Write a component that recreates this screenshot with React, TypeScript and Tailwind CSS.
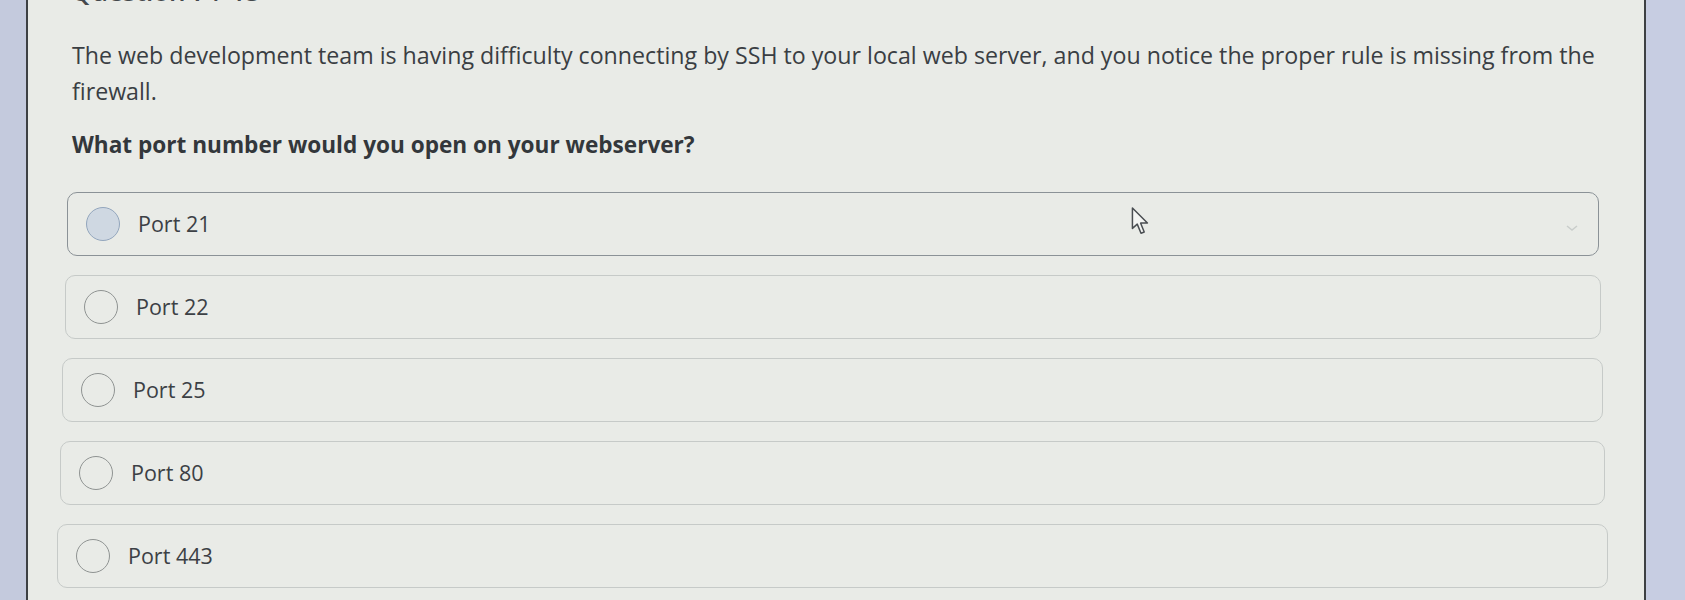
import React from "react";

const options = [
  { label: "Port 21", hover: true, box: "ml-[39px] mr-[45px]" },
  { label: "Port 22", hover: false, box: "ml-[37px] mr-[43px]" },
  { label: "Port 25", hover: false, box: "ml-[34px] mr-[41px]" },
  { label: "Port 80", hover: false, box: "ml-[32px] mr-[39px]" },
  { label: "Port 443", hover: false, box: "ml-[29px] mr-[36px]" },
];

function Radio({ active }: { active: boolean }) {
  return (
    <span
      className={
        active
          ? "block w-[34px] h-[34px] rounded-full border-[1.5px] border-[#93a6bd] bg-[#cfd8e2]"
          : "block w-[34px] h-[34px] rounded-full border-[1.5px] border-[#8f9392]"
      }
    />
  );
}

function App() {
  return (
    <div
      className="flex w-[1685px] h-[600px] overflow-hidden bg-[#c6cce0]"
      style={{ fontFamily: '"Open Sans", "Noto Sans", sans-serif' }}
    >
      {/* left edge of the screen */}
      <div className="w-[26px] shrink-0 bg-[#c4cadd]" />
      <div className="w-[2px] shrink-0 bg-[#3d4043]" />

      {/* page */}
      <div className="relative w-[1616px] shrink-0 bg-[#e9ebe7] text-[#3a3e43]">
        <div className="ml-[43px] -mt-[24px] text-[26px] leading-[30px] font-semibold text-[#44484c]">
          Question 7 / 15
        </div>

        <p className="ml-[44px] mt-[31px] mr-[20px] text-[23.2px] leading-[36px]">
          The web development team is having difficulty connecting by SSH to your local web server, and you notice the
          proper rule is missing from the firewall.
        </p>

        <p className="ml-[44px] mt-[19px] text-[22.6px] leading-[33px] font-bold text-[#33373b]">
          What port number would you open on your webserver?
        </p>

        <div className="mt-[31px] flex flex-col gap-[19px]">
          {options.map((o) => (
            <div
              key={o.label}
              className={
                "flex items-center h-[64px] rounded-[10px] pl-[18px] gap-[18px] " +
                (o.hover ? "border-[1.5px] border-[#8b9297] " : "border-[1.5px] border-[#c6cac8] ") +
                o.box
              }
            >
              <Radio active={o.hover} />
              <span className="text-[21.5px] text-[#3c4045]">{o.label}</span>
              {o.hover && (
                <svg className="ml-auto mr-[20px] mt-[10px]" width="12" height="8" viewBox="0 0 12 8">
                  <path d="M1 1 L6 5 L11 1" fill="none" stroke="#c9cdcb" strokeWidth="1.5" />
                </svg>
              )}
            </div>
          ))}
        </div>

        {/* mouse pointer */}
        <svg className="absolute left-[1103px] top-[207px]" width="20" height="30" viewBox="0 0 18 28">
          <path
            d="M1 1 L1 20 L5.5 16 L9 24.5 L12 23.3 L8.6 15 L15 15 Z"
            fill="#f4f5f3"
            stroke="#4a4e52"
            strokeWidth="1.4"
            strokeLinejoin="round"
          />
        </svg>
      </div>

      {/* right edge of the screen */}
      <div className="w-[2px] shrink-0 bg-[#3d4043]" />
      <div className="flex-1 bg-[#c7cde2]" />
    </div>
  );
}

export default App;
